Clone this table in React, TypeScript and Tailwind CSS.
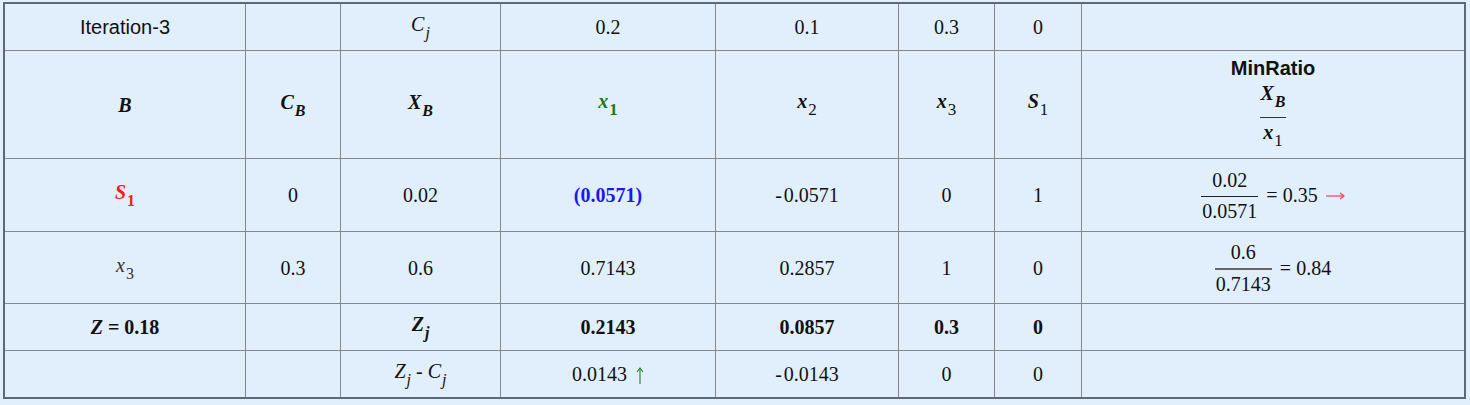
import React from 'react';

const serif = "font-['Liberation_Serif']";
const sans = "font-['Liberation_Sans']";

const Sub = ({ children, className = '' }: { children: React.ReactNode; className?: string }) => (
  <span className={`align-[-7px] text-[16px] ml-[1px] ${className}`}>{children}</span>
);

const Frac = ({ num, den, line = 'h-px bg-[#222]' }: { num: React.ReactNode; den: React.ReactNode; line?: string }) => (
  <span className="inline-flex flex-col items-center">
    <span className="leading-[22px] pb-[5px] px-[1px]">{num}</span>
    <span className={`self-stretch ${line}`} />
    <span className="leading-[22px] pt-[3px] px-[1px]">{den}</span>
  </span>
);

const Cell = ({ children, className = '', font = serif }: { children?: React.ReactNode; className?: string; font?: string }) => (
  <div className={`flex items-center justify-center bg-[#e1eefb] text-[20px] text-[#111] ${font} ${className}`}>
    {children}
  </div>
);

const ArrowRight = () => (
  <svg width="19" height="8" viewBox="0 0 19 8" className="ml-[8px] mt-[2px]" fill="none" stroke="#ff3b5c" strokeWidth="1.2">
    <path d="M0 4 H18" />
    <path d="M14 1 L18 4 L14 7" />
  </svg>
);

const ArrowUp = () => (
  <svg width="8" height="17" viewBox="0 0 8 17" className="ml-[9px] mt-[2px]" fill="none" stroke="#2e8b2e" strokeWidth="1.2">
    <path d="M4 1 V17" />
    <path d="M1 5 L4 1 L7 5" />
  </svg>
);

const Ratio = ({ num, den, value, arrow }: { num: string; den: string; value: string; arrow?: boolean }) => (
  <span className="inline-flex items-center">
    <Frac num={num} den={den} line={arrow ? 'h-px bg-[#222]' : 'h-[2px] bg-[#666]'} />
    <span className="ml-[8px]">= {value}</span>
    {arrow && <ArrowRight />}
  </span>
);

export default function App() {
  return (
    <div className="min-h-screen bg-[#e1eefb] pt-[2px] pl-[3px]">
      <div className="grid w-fit grid-cols-[240px_94px_159px_214px_182px_95px_86px_382px] grid-rows-[46px_107px_72px_71px_46px_46px] gap-px border-2 border-[#5f6877] bg-[#878787]">
        {/* row 1: Cj */}
        <Cell font={sans}>Iteration-3</Cell>
        <Cell />
        <Cell>
          <span className="italic">C<Sub>j</Sub></span>
        </Cell>
        <Cell>0.2</Cell>
        <Cell>0.1</Cell>
        <Cell>0.3</Cell>
        <Cell>0</Cell>
        <Cell />

        {/* row 2: headers */}
        <Cell><span className="font-bold italic">B</span></Cell>
        <Cell><span className="font-bold italic">C<Sub>B</Sub></span></Cell>
        <Cell><span className="font-bold italic">X<Sub>B</Sub></span></Cell>
        <Cell>
          <span className="font-bold italic text-[#177a17]">x<Sub className="not-italic text-[17px]">1</Sub></span>
        </Cell>
        <Cell><span className="font-bold italic">x<Sub className="not-italic font-normal text-[17px]">2</Sub></span></Cell>
        <Cell><span className="font-bold italic">x<Sub className="not-italic font-normal text-[17px]">3</Sub></span></Cell>
        <Cell><span className="font-bold italic">S<Sub className="not-italic font-normal text-[17px]">1</Sub></span></Cell>
        <Cell className="flex-col">
          <span className="font-['Liberation_Sans'] font-bold text-[20px] leading-[22px]">MinRatio</span>
          <span className="inline-flex flex-col items-center mt-[3px]">
            <span className="leading-[22px] pb-[4px] font-bold italic">X<Sub>B</Sub></span>
            <span className="self-stretch h-px bg-[#333]" />
            <span className="leading-[22px] pt-[3px] font-bold italic">x<Sub className="not-italic font-normal text-[17px]">1</Sub></span>
          </span>
        </Cell>

        {/* row 3: S1 */}
        <Cell>
          <span className="font-bold italic text-[#ff1a1a]">S<Sub className="not-italic">1</Sub></span>
        </Cell>
        <Cell>0</Cell>
        <Cell>0.02</Cell>
        <Cell><span className="font-bold text-[#1a1aee]">(0.0571)</span></Cell>
        <Cell>-{'\u200a'}0.0571</Cell>
        <Cell>0</Cell>
        <Cell>1</Cell>
        <Cell><Ratio num="0.02" den="0.0571" value="0.35" arrow /></Cell>

        {/* row 4: x3 */}
        <Cell>
          <span className="italic text-[#333]">x<Sub className="not-italic">3</Sub></span>
        </Cell>
        <Cell>0.3</Cell>
        <Cell>0.6</Cell>
        <Cell>0.7143</Cell>
        <Cell>0.2857</Cell>
        <Cell>1</Cell>
        <Cell>0</Cell>
        <Cell><Ratio num="0.6" den="0.7143" value="0.84" /></Cell>

        {/* row 5: Zj */}
        <Cell><span className="font-bold"><span className="italic">Z</span> = 0.18</span></Cell>
        <Cell />
        <Cell><span className="font-bold italic">Z<Sub>j</Sub></span></Cell>
        <Cell className="font-bold">0.2143</Cell>
        <Cell className="font-bold">0.0857</Cell>
        <Cell className="font-bold">0.3</Cell>
        <Cell className="font-bold">0</Cell>
        <Cell />

        {/* row 6: Zj - Cj */}
        <Cell />
        <Cell />
        <Cell>
          <span className="italic">Z<Sub>j</Sub> - C<Sub>j</Sub></span>
        </Cell>
        <Cell>
          0.0143
          <ArrowUp />
        </Cell>
        <Cell>-{'\u200a'}0.0143</Cell>
        <Cell>0</Cell>
        <Cell>0</Cell>
        <Cell />
      </div>
    </div>
  );
}
